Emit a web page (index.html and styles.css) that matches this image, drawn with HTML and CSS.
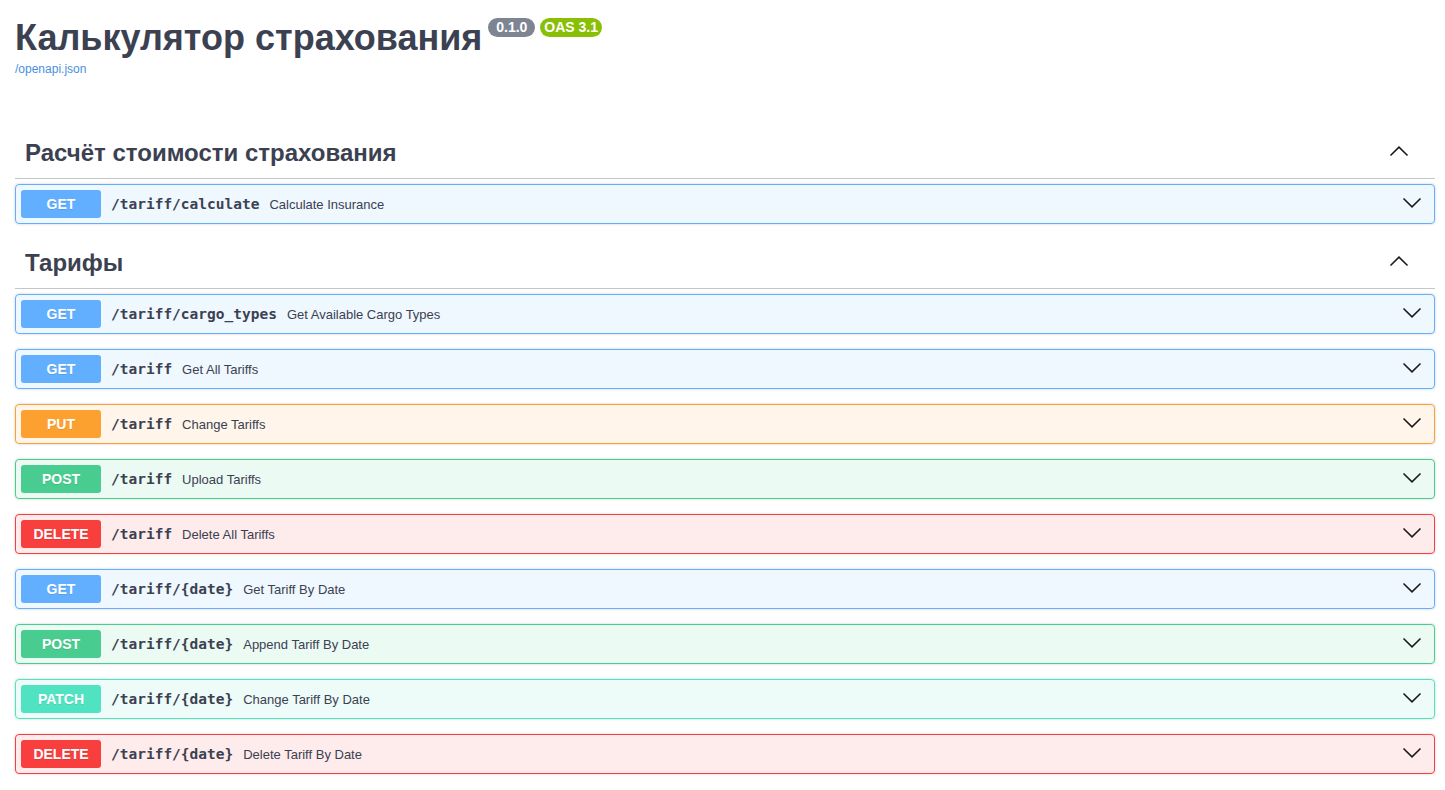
FILE: index.html
```html
<!DOCTYPE html>
<html lang="ru">
<head>
<meta charset="utf-8">
<title>Калькулятор страхования</title>
<link rel="stylesheet" href="styles.css">
</head>
<body>
<div class="wrapper">
  <div class="info">
    <h2 class="title"><span class="title-text">Калькулятор страхования</span><span class="badge badge-version"> 0.1.0 </span><span class="badge badge-oas">OAS 3.1</span></h2>
    <a class="link" href="#">/openapi.json</a>
  </div>

  <section class="tag-section">
    <h3 class="tag"><span>Расчёт стоимости страхования</span>
      <svg class="tag-arrow" viewBox="0 0 20 20"><path d="M1.5 12.5 L10 4.2 L18.5 12.5"/></svg>
    </h3>
    <div class="ops">
      <div class="op op-get"><span class="method">GET</span><span class="path">/tariff/calculate</span><span class="desc">Calculate Insurance</span><svg class="op-arrow" viewBox="0 0 20 20"><path d="M1.5 4.5 L10 12.8 L18.5 4.5"/></svg></div>
    </div>
  </section>

  <section class="tag-section">
    <h3 class="tag"><span>Тарифы</span>
      <svg class="tag-arrow" viewBox="0 0 20 20"><path d="M1.5 12.5 L10 4.2 L18.5 12.5"/></svg>
    </h3>
    <div class="ops">
      <div class="op op-get"><span class="method">GET</span><span class="path">/tariff/cargo_types</span><span class="desc">Get Available Cargo Types</span><svg class="op-arrow" viewBox="0 0 20 20"><path d="M1.5 4.5 L10 12.8 L18.5 4.5"/></svg></div>
      <div class="op op-get"><span class="method">GET</span><span class="path">/tariff</span><span class="desc">Get All Tariffs</span><svg class="op-arrow" viewBox="0 0 20 20"><path d="M1.5 4.5 L10 12.8 L18.5 4.5"/></svg></div>
      <div class="op op-put"><span class="method">PUT</span><span class="path">/tariff</span><span class="desc">Change Tariffs</span><svg class="op-arrow" viewBox="0 0 20 20"><path d="M1.5 4.5 L10 12.8 L18.5 4.5"/></svg></div>
      <div class="op op-post"><span class="method">POST</span><span class="path">/tariff</span><span class="desc">Upload Tariffs</span><svg class="op-arrow" viewBox="0 0 20 20"><path d="M1.5 4.5 L10 12.8 L18.5 4.5"/></svg></div>
      <div class="op op-delete"><span class="method">DELETE</span><span class="path">/tariff</span><span class="desc">Delete All Tariffs</span><svg class="op-arrow" viewBox="0 0 20 20"><path d="M1.5 4.5 L10 12.8 L18.5 4.5"/></svg></div>
      <div class="op op-get"><span class="method">GET</span><span class="path">/tariff/{date}</span><span class="desc">Get Tariff By Date</span><svg class="op-arrow" viewBox="0 0 20 20"><path d="M1.5 4.5 L10 12.8 L18.5 4.5"/></svg></div>
      <div class="op op-post"><span class="method">POST</span><span class="path">/tariff/{date}</span><span class="desc">Append Tariff By Date</span><svg class="op-arrow" viewBox="0 0 20 20"><path d="M1.5 4.5 L10 12.8 L18.5 4.5"/></svg></div>
      <div class="op op-patch"><span class="method">PATCH</span><span class="path">/tariff/{date}</span><span class="desc">Change Tariff By Date</span><svg class="op-arrow" viewBox="0 0 20 20"><path d="M1.5 4.5 L10 12.8 L18.5 4.5"/></svg></div>
      <div class="op op-delete"><span class="method">DELETE</span><span class="path">/tariff/{date}</span><span class="desc">Delete Tariff By Date</span><svg class="op-arrow" viewBox="0 0 20 20"><path d="M1.5 4.5 L10 12.8 L18.5 4.5"/></svg></div>
    </div>
  </section>
</div>
</body>
</html>
```

FILE: styles.css
```css
html, body {
  margin: 0;
  padding: 0;
  background: #fff;
}

body {
  font-family: "Liberation Sans", Arial, sans-serif;
  color: #3b4151;
}

.wrapper {
  padding: 20px 10px 0 15px;
}

.info {
  margin-bottom: 52px;
}

.title {
  display: flex;
  align-items: flex-start;
  margin: 0;
  font-size: 36px;
  font-weight: 700;
  line-height: 36px;
  color: #3b4151;
}

.title-text {
  display: block;
}

.badge {
  display: inline-block;
  margin: -2px 0 0 5px;
  padding: 2px 4px;
  border-radius: 57px;
  font-size: 14px;
  line-height: 15px;
  font-weight: 700;
  color: #fff;
  white-space: pre;
  font-family: "Liberation Sans", Arial, sans-serif;
}

.badge-version {
  background: #7d8492;
  margin-left: 6px;
}

.badge-oas {
  background: #89bf04;
}

.link {
  display: block;
  margin-top: 6px;
  font-size: 12px;
  line-height: 14px;
  color: #4990e2;
  text-decoration: none;
}

.tag-section + .tag-section {
  margin-top: -1px;
}

.tag {
  display: flex;
  align-items: center;
  justify-content: space-between;
  margin: 0;
  height: 30px;
  padding: 10px 26px 10px 10px;
  border-bottom: 1px solid rgba(59, 65, 81, 0.3);
  font-size: 24px;
  font-weight: 700;
  color: #3b4151;
}

.tag-arrow {
  width: 20px;
  height: 20px;
  fill: none;
  stroke: #1b1b1b;
  stroke-width: 1.6;
}

.ops {
  padding-top: 5px;
}

.op {
  display: flex;
  align-items: center;
  height: 28px;
  padding: 5px;
  margin-bottom: 15px;
  border: 1px solid;
  border-radius: 4px;
  box-shadow: 0 0 3px rgba(0, 0, 0, 0.19);
}

.method {
  display: inline-block;
  min-width: 80px;
  height: 28px;
  line-height: 28px;
  text-align: center;
  border-radius: 3px;
  font-size: 14px;
  font-weight: 700;
  color: #fff;
  text-shadow: 0 1px 0 rgba(0, 0, 0, 0.1);
}

.path {
  padding: 0 10px;
  font-family: "DejaVu Sans Mono", "Liberation Mono", monospace;
  font-size: 14.5px;
  font-weight: 700;
  color: #3b4151;
}

.desc {
  flex: 1;
  font-size: 13px;
  color: #3b4151;
}

.op-arrow {
  width: 20px;
  height: 20px;
  margin-right: 7px;
  fill: none;
  stroke: #1b1b1b;
  stroke-width: 1.6;
}

.op-get { border-color: #61affe; background: rgba(97, 175, 254, 0.1); }
.op-get .method { background: #61affe; }

.op-put { border-color: #fca130; background: rgba(252, 161, 48, 0.1); }
.op-put .method { background: #fca130; }

.op-post { border-color: #49cc90; background: rgba(73, 204, 144, 0.1); }
.op-post .method { background: #49cc90; }

.op-delete { border-color: #f93e3e; background: rgba(249, 62, 62, 0.1); }
.op-delete .method { background: #f93e3e; }

.op-patch { border-color: #50e3c2; background: rgba(80, 227, 194, 0.1); }
.op-patch .method { background: #50e3c2; }
```
